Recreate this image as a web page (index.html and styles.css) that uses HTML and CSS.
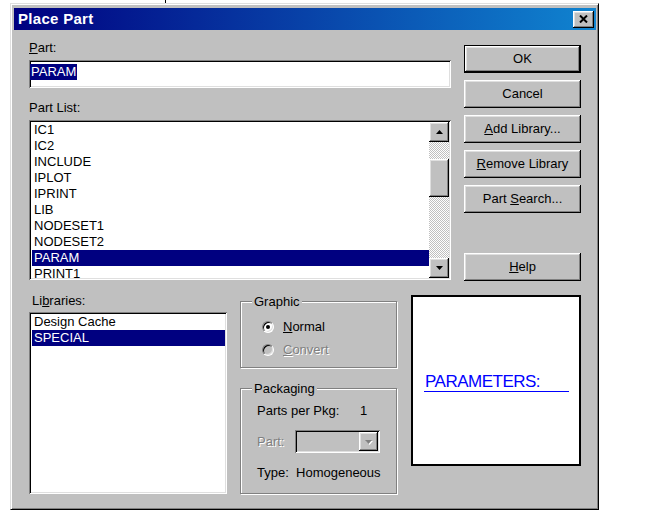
FILE: index.html
```html
<!DOCTYPE html>
<html>
<head>
<meta charset="utf-8">
<link rel="stylesheet" href="styles.css">
</head>
<body>
<div class="tick"></div>
<div class="dialog">
  <div class="titlebar">
    <span class="title">Place Part</span>
    <div class="close">
      <svg width="9" height="8" viewBox="0 0 9 8"><path d="M1 0.5 L8 7.5 M8 0.5 L1 7.5" stroke="#000" stroke-width="2" fill="none"/></svg>
    </div>
  </div>
  <div class="content">
    <div class="top">
      <div class="leftcol">
        <div class="label"><u>P</u>art:</div>
        <div class="input sunken"><span class="sel">PARAM</span></div>
        <div class="label lbl-list">Part List:</div>
        <div class="listbox sunken">
          <div class="items">
            <div class="item">IC1</div>
            <div class="item">IC2</div>
            <div class="item">INCLUDE</div>
            <div class="item">IPLOT</div>
            <div class="item">IPRINT</div>
            <div class="item">LIB</div>
            <div class="item">NODESET1</div>
            <div class="item">NODESET2</div>
            <div class="item selected">PARAM</div>
            <div class="item">PRINT1</div>
          </div>
          <div class="scrollbar">
            <div class="sb-btn raised"><svg width="7" height="4" viewBox="0 0 7 4"><polygon points="3.5,0 7,4 0,4" fill="#000"/></svg></div>
            <div class="track"><div class="thumb raised"></div></div>
            <div class="sb-btn raised"><svg width="7" height="4" viewBox="0 0 7 4"><polygon points="0,0 7,0 3.5,4" fill="#000"/></svg></div>
          </div>
        </div>
      </div>
      <div class="buttons">
        <div class="btn default">OK</div>
        <div class="btn raised">Cancel</div>
        <div class="btn raised"><u>A</u>dd Library...</div>
        <div class="btn raised"><u>R</u>emove Library</div>
        <div class="btn raised">Part <u>S</u>earch...</div>
        <div class="btn raised help"><u>H</u>elp</div>
      </div>
    </div>
    <div class="bottom">
      <div class="libcol">
        <div class="label lbl-lib">Li<u>b</u>raries:</div>
        <div class="libbox sunken">
          <div class="item">Design Cache</div>
          <div class="item selected">SPECIAL</div>
        </div>
      </div>
      <div class="midcol">
        <div class="group graphic">
          <span class="legend">Graphic</span>
          <div class="radio-row">
            <span class="radio checked"></span>
            <span class="rtext"><u>N</u>ormal</span>
          </div>
          <div class="radio-row second">
            <span class="radio disabled"></span>
            <span class="rtext dis"><u>C</u>onvert</span>
          </div>
        </div>
        <div class="group packaging">
          <span class="legend">Packaging</span>
          <div class="line"><span class="ppk">Parts per Pkg:</span>1</div>
          <div class="part-row">
            <span class="plabel dis">Part:</span>
            <div class="combo sunken">
              <div class="combo-btn raised"><svg width="7" height="4" viewBox="0 0 7 4"><polygon points="1,1 8,1 4.5,5" fill="#fff"/><polygon points="0,0 7,0 3.5,4" fill="#808080"/></svg></div>
            </div>
          </div>
          <div class="line type-row">Type:&nbsp; Homogeneous</div>
        </div>
      </div>
      <div class="preview">
        <div class="param">PARAMETERS:</div>
      </div>
    </div>
  </div>
</div>
</body>
</html>
```

FILE: styles.css
```css
* { box-sizing: border-box; }

body {
  margin: 0;
  background: #fff;
  font: 13px/15px "Liberation Sans", Arial, sans-serif;
  color: #000;
  position: relative;
}

.tick {
  position: absolute;
  left: 165px;
  top: 0;
  width: 1px;
  height: 3px;
  background: #000;
}

.dialog {
  margin: 3px 0 0 10px;
  width: 589px;
  height: 507px;
  background: #c0c0c0;
  border: 1px solid;
  border-color: #dfdfdf #000 #000 #dfdfdf;
  box-shadow: inset 1px 1px #fff, inset -1px -1px #808080;
  padding: 4px 2px 0 3px;
}

.raised {
  background: #c0c0c0;
  box-shadow: inset -1px -1px #000, inset 1px 1px #fff, inset -2px -2px #808080, inset 2px 2px #dfdfdf;
}

.sunken {
  box-shadow: inset 1px 1px #808080, inset -1px -1px #fff, inset 2px 2px #000, inset -2px -2px #dfdfdf;
}

.titlebar {
  height: 22px;
  display: flex;
  align-items: center;
  justify-content: space-between;
  background: linear-gradient(to right, #000080, #1084d0);
  padding: 0 2px 0 4px;
}

.title {
  color: #fff;
  font-weight: bold;
  font-size: 15px;
  line-height: 22px;
  letter-spacing: 0.3px;
}

.close {
  width: 21px;
  height: 17px;
  background: #c0c0c0;
  box-shadow: inset -1px -1px #000, inset 1px 1px #fff, inset -2px -2px #808080, inset 2px 2px #dfdfdf;
  display: flex;
  align-items: center;
  justify-content: center;
}

.content { padding-left: 15px; }

.top { display: flex; height: 250px; }

.leftcol { width: 422px; padding-top: 10px; }

.label { height: 15px; white-space: nowrap; }

.lbl-list { margin-top: 12px; }

.input {
  margin-top: 5px;
  height: 28px;
  background: #fff;
  padding: 4px 1px 0;
}

.sel {
  display: inline-block;
  background: #000080;
  color: #fff;
  line-height: 16px;
  padding: 0 1px;
}

.listbox {
  margin-top: 5px;
  height: 160px;
  display: flex;
  padding: 2px;
  background: #fff;
}

.items {
  flex: 1;
  padding-left: 1px;
  overflow: hidden;
}

.item {
  height: 16px;
  line-height: 16px;
  padding-left: 2px;
  white-space: nowrap;
  overflow: hidden;
}

.item.selected { background: #000080; color: #fff; }

.scrollbar {
  width: 20px;
  display: flex;
  flex-direction: column;
}

.sb-btn {
  height: 20px;
  display: flex;
  align-items: center;
  justify-content: center;
}

.track {
  flex: 1;
  background: repeating-conic-gradient(#c0c0c0 0 25%, #fff 0 50%) 0 0 / 2px 2px;
}

.thumb { margin-top: 17px; height: 38px; }

.buttons {
  margin-left: 13px;
  width: 117px;
  padding-top: 15px;
  display: flex;
  flex-direction: column;
  gap: 7px;
}

.btn {
  height: 28px;
  line-height: 28px;
  text-align: center;
  white-space: nowrap;
}

.btn.default {
  border: 1px solid #000;
  line-height: 26px;
  background: #c0c0c0;
  box-shadow: inset -1px -1px #000, inset 1px 1px #fff, inset -2px -2px #808080, inset 2px 2px #dfdfdf;
}

.btn.help { margin-top: 33px; }

.bottom { display: flex; align-items: flex-start; }

.libcol { width: 198px; padding-top: 13px; }

.lbl-lib { padding-left: 3px; }

.libbox {
  margin-top: 4px;
  height: 182px;
  padding: 2px 2px 2px 3px;
  background: #fff;
}

.libbox .item { padding-left: 2px; }

.midcol {
  margin-left: 13px;
  width: 157px;
  padding-top: 21px;
}

.group {
  position: relative;
  border: 1px solid #808080;
  box-shadow: inset 1px 1px #fff, 1px 1px #fff;
}

.legend {
  position: absolute;
  top: -8px;
  left: 11px;
  padding: 0 2px;
  background: #c0c0c0;
  line-height: 15px;
}

.graphic { height: 67px; padding: 17px 0 0 21px; }

.radio-row {
  display: flex;
  align-items: center;
  height: 15px;
}

.radio-row.second { margin-top: 8px; }

.radio {
  width: 12px;
  height: 12px;
  border-radius: 50%;
  border: 1px solid;
  border-color: #808080 #fff #fff #808080;
  background: #fff;
  box-shadow: inset 1px 1px #000, inset -1px -1px #dfdfdf;
  display: flex;
  align-items: center;
  justify-content: center;
}

.radio.checked::after {
  content: "";
  width: 4px;
  height: 4px;
  border-radius: 50%;
  background: #000;
}

.radio.disabled { background: #c0c0c0; }

.rtext { margin-left: 9px; }

.dis { color: #808080; text-shadow: 1px 1px #fff; }

.packaging {
  margin-top: 20px;
  height: 106px;
  padding: 14px 0 0 16px;
}

.line { height: 15px; white-space: nowrap; }

.ppk { display: inline-block; width: 103px; }

.part-row {
  display: flex;
  align-items: center;
  margin-top: 12px;
  height: 23px;
}

.plabel { width: 38px; }

.combo {
  width: 85px;
  height: 23px;
  padding: 2px;
  display: flex;
  justify-content: flex-end;
}

.combo-btn {
  width: 19px;
  height: 19px;
  display: flex;
  align-items: center;
  justify-content: center;
}

.combo-btn svg { overflow: visible; }

.type-row { margin-top: 12px; }

.preview {
  margin-left: 14px;
  margin-top: 15px;
  width: 170px;
  height: 171px;
  background: #fff;
  border: 2px solid #000;
  padding: 75px 0 0 11px;
}

.param {
  width: 145px;
  border-bottom: 1px solid #00f;
  color: #00f;
  font-size: 17px;
  line-height: 19px;
  letter-spacing: -0.5px;
  padding-left: 1px;
  white-space: nowrap;
}
```
